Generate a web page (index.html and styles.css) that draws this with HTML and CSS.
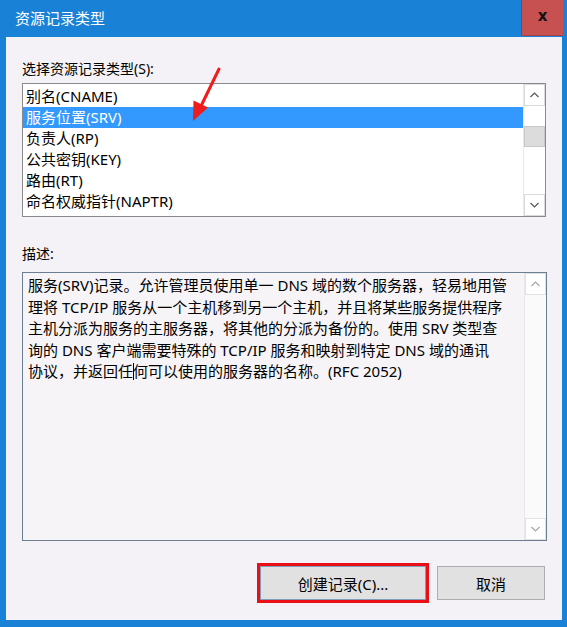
FILE: index.html
```html
<!DOCTYPE html>
<html lang="zh-CN">
<head>
<meta charset="utf-8">
<title>资源记录类型</title>
<link rel="stylesheet" href="styles.css">
</head>
<body>
<div class="window">
  <div class="titlebar">
    <span class="title">资源记录类型</span>
    <span class="close">x</span>
  </div>
  <div class="client">
    <div class="label">选择资源记录类型(S):</div>
    <div class="listbox">
      <ul class="items">
        <li>别名(CNAME)</li>
        <li class="selected">服务位置(SRV)</li>
        <li>负责人(RP)</li>
        <li>公共密钥(KEY)</li>
        <li>路由(RT)</li>
        <li>命名权威指针(NAPTR)</li>
      </ul>
      <div class="scrollbar">
        <div class="sb-btn"><svg width="9" height="6" viewBox="0 0 9 6"><polyline points="0.5,5 4.5,1 8.5,5" fill="none" stroke="#555" stroke-width="1.2"/></svg></div>
        <div class="sb-track">
          <div class="sb-thumb"></div>
        </div>
        <div class="sb-btn"><svg width="9" height="6" viewBox="0 0 9 6"><polyline points="0.5,1 4.5,5 8.5,1" fill="none" stroke="#555" stroke-width="1.2"/></svg></div>
      </div>
    </div>
    <div class="label label-desc">描述:</div>
    <div class="descbox">
      <div class="desctext"><div class="line">服务(SRV)记录。允许管理员使用单一 DNS 域的数个服务器，轻易地用管</div><div class="line">理将 TCP/IP 服务从一个主机移到另一个主机，并且将某些服务提供程序</div><div class="line">主机分派为服务的主服务器，将其他的分派为备份的。使用 SRV 类型查</div><div class="line">询的 DNS 客户端需要特殊的 TCP/IP 服务和映射到特定 DNS 域的通讯</div><div class="line">协议，并返回任<span class="caret"></span>何可以使用的服务器的名称。(RFC 2052)</div></div>
      <div class="scrollbar sb-disabled">
        <div class="sb-btn"><svg width="9" height="6" viewBox="0 0 9 6"><polyline points="0.5,5 4.5,1 8.5,5" fill="none" stroke="#a6a6a6" stroke-width="1.2"/></svg></div>
        <div class="sb-track"></div>
        <div class="sb-btn"><svg width="9" height="6" viewBox="0 0 9 6"><polyline points="0.5,1 4.5,5 8.5,1" fill="none" stroke="#a6a6a6" stroke-width="1.2"/></svg></div>
      </div>
    </div>
    <div class="buttons">
      <div class="highlight"><button class="btn btn-create">创建记录(C)...</button></div>
      <button class="btn btn-cancel">取消</button>
    </div>
  </div>
  <svg class="arrow" width="567" height="627" viewBox="0 0 567 627">
    <line x1="219" y1="69" x2="202" y2="104" stroke="#ee1c1c" stroke-width="3" stroke-linecap="round"/>
    <polygon points="193,121 193.5,100.5 208,107.5" fill="#ee1c1c"/>
  </svg>
</div>
</body>
</html>
```

FILE: styles.css
```css
* { box-sizing: border-box; }
html, body { margin: 0; padding: 0; }
body {
  width: 567px;
  height: 627px;
  overflow: hidden;
  font-family: "Noto Sans", "Noto Sans CJK SC", sans-serif;
  color: #000;
}
.window {
  position: relative;
  width: 567px;
  height: 627px;
  background: #1a82d6;
  padding: 0 5px 7px 6px;
  display: flex;
  flex-direction: column;
}
.titlebar {
  height: 37px;
  display: flex;
  align-items: flex-start;
  justify-content: space-between;
}
.title {
  color: #fff;
  font-size: 15px;
  line-height: 36px;
  padding-left: 9px;
  font-family: "Noto Sans CJK SC", sans-serif;
}
.close {
  width: 42px;
  height: 36px;
  margin-right: -1px;
  background: #c75050;
  border-left: 1px solid #9a3c3c;
  border-bottom: 1px solid #a84444;
  color: #111;
  font-family: "DejaVu Sans", sans-serif;
  font-weight: bold;
  font-size: 15px;
  line-height: 33px;
  text-align: center;
}
.client {
  flex: 1;
  background: #f4f2f6;
  padding: 23px 16px 0 16px;
  font-size: 15px;
}
.label {
  height: 17px;
  line-height: 17px;
  font-size: 14px;
  margin-bottom: 6px;
}
.label-desc {
  margin-top: 28px;
  margin-bottom: 10px;
}
.listbox {
  width: 524px;
  height: 134px;
  border: 1px solid #8a8a8a;
  background: #fff;
  display: flex;
}
.items {
  list-style: none;
  margin: 0;
  padding: 2px 0 0 0;
  flex: 1;
}
.items li {
  height: 21px;
  line-height: 21px;
  padding-left: 3px;
  white-space: nowrap;
}
.items li.selected {
  background: #3399ff;
  color: #fff;
}
.scrollbar {
  width: 22px;
  display: flex;
  flex-direction: column;
  background: #fff;
  border-left: 1px solid #e8e8e8;
}
.sb-btn {
  height: 22px;
  border: 1px solid #dadada;
  display: flex;
  align-items: center;
  justify-content: center;
  background: #fff;
}
.sb-track {
  flex: 1;
  padding-top: 20px;
}
.sb-thumb {
  height: 21px;
  background: #dcdcdc;
  border: 1px solid #c8c8c8;
}
.descbox {
  width: 525px;
  height: 269px;
  border: 1px solid #6b7f94;
  background: #f6f4f7;
  display: flex;
}
.desctext {
  flex: 1;
  padding: 2px 0 0 5px;
  font-size: 15px;
  line-height: 21.5px;
  white-space: pre;
}
.caret {
  display: inline-block;
  width: 1px;
  height: 17px;
  background: #000;
  vertical-align: -3px;
  margin-right: -1px;
}
.sb-disabled .sb-btn { border-color: #e2e2e2; }
.sb-disabled { background: #fafafa; }
.buttons {
  margin-top: 22px;
  display: flex;
  justify-content: flex-end;
  align-items: center;
  gap: 8px;
  padding-right: 1px;
}
.highlight {
  border: 3px solid #ea0f17;
}
.btn {
  display: block;
  height: 34px;
  background: #e1e1e1;
  border: 1px solid #adadad;
  font-family: "Noto Sans", "Noto Sans CJK SC", sans-serif;
  font-size: 15px;
  color: #000;
  padding: 0;
  margin: 0;
}
.btn-create {
  width: 166px;
  border-color: #7f9db9;
}
.btn-cancel {
  width: 108px;
}
.arrow {
  position: absolute;
  left: 0;
  top: 0;
  pointer-events: none;
}
```
